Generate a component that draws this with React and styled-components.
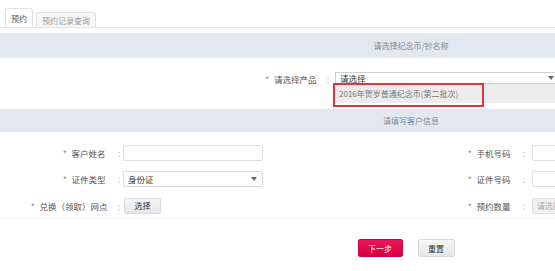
import styled, { createGlobalStyle } from "styled-components";

const GlobalStyle = createGlobalStyle`
  body {
    margin: 0;
    background: #fff;
    overflow: hidden;
    font-family: "Noto Sans CJK SC", "Liberation Sans", sans-serif;
    color: #444;
  }
`;

const Page = styled.div`
  width: 822px;
`;

const TabBar = styled.div`
  height: 28px;
  display: flex;
  align-items: flex-end;
  gap: 3px;
  padding-left: 5px;
  border-bottom: 1px solid #e4e4e4;
  box-sizing: border-box;
`;

const Tab = styled.div`
  height: ${(p) => (p.$active ? "19px" : "15px")};
  padding: 0 5px;
  display: flex;
  align-items: center;
  font-size: 8px;
  color: ${(p) => (p.$active ? "#555" : "#999")};
  background: ${(p) => (p.$active ? "#fff" : "#f7f7f7")};
  border: 1px solid #e2e2e2;
  border-bottom: none;
  border-radius: 3px 3px 0 0;
  box-sizing: border-box;
`;

const Band = styled.div`
  height: ${(p) => p.$height}px;
  margin-top: ${(p) => p.$top || 0}px;
  background: #e2e8ef;
  display: flex;
  align-items: center;
  justify-content: center;
  font-size: 8px;
  color: #7f8b99;
`;

const ProductRow = styled.div`
  height: 51px;
  display: flex;
  align-items: flex-start;
  padding-top: 14px;
  box-sizing: border-box;
`;

const Label = styled.div`
  width: ${(p) => p.$width}px;
  flex-shrink: 0;
  display: flex;
  justify-content: flex-end;
  align-items: center;
  gap: ${(p) => p.$gap || 12}px;
  font-size: 8.5px;
  color: #555;
  white-space: nowrap;
  height: 14px;

  & i {
    font-style: normal;
    color: #888;
    margin-right: 3px;
  }
  & b {
    font-weight: normal;
    color: #aaa;
  }
`;

const SelectWrap = styled.div`
  position: relative;
  margin-left: ${(p) => p.$gap}px;
`;

const Select = styled.div`
  width: ${(p) => p.$width}px;
  height: ${(p) => p.$height}px;
  border: 1px solid ${(p) => p.$border || "#dcdcdc"};
  background: #fff;
  box-sizing: border-box;
  display: flex;
  align-items: center;
  justify-content: space-between;
  padding: 0 5px 0 4px;
  font-size: 8.5px;
  line-height: 1;
  color: #333;

  &::after {
    content: "";
    border-left: 3.5px solid transparent;
    border-right: 3.5px solid transparent;
    border-top: 4px solid #666;
  }
`;

const Menu = styled.div`
  position: absolute;
  top: 12px;
  left: 0;
  width: 225px;
  height: 19px;
  background: #ececec;
  display: flex;
  align-items: center;
  padding-left: 4px;
  box-sizing: border-box;
  font-size: 8px;
  color: #777;
`;

const Highlight = styled.div`
  position: absolute;
  top: 11px;
  left: -2px;
  width: 151px;
  height: 24px;
  border: 2px solid #e0343f;
  box-sizing: border-box;
`;

const Form = styled.div`
  padding-top: 13px;
  display: grid;
  grid-template-columns: 411px 411px;
  row-gap: 6px;
  height: 87px;
  box-sizing: border-box;
  border-bottom: 1px solid #f3f3f3;
`;

const Field = styled.div`
  height: 16px;
  display: flex;
  align-items: center;
`;

const Input = styled.div`
  width: 140px;
  height: 16px;
  margin-left: ${(p) => p.$gap}px;
  border: 1px solid #dedede;
  border-radius: 2px;
  box-sizing: border-box;
  background: ${(p) => (p.$disabled ? "#f0f0f0" : "#fff")};
  font-size: 8px;
  color: #aaa;
  display: flex;
  align-items: center;
  padding-left: 4px;
`;

const FieldSelect = styled(Select)`
  margin-left: ${(p) => p.$gap}px;
  border-radius: 2px;
`;

const Button = styled.button`
  height: ${(p) => p.$height || 18}px;
  width: ${(p) => p.$width}px;
  margin-left: ${(p) => p.$gap || 0}px;
  padding: 0;
  font-family: inherit;
  font-size: 8px;
  border-radius: 2px;
  border: 1px solid ${(p) => (p.$primary ? "#d8003c" : "#dadada")};
  background: ${(p) =>
    p.$primary
      ? "linear-gradient(#e8175a, #d6003e)"
      : "linear-gradient(#f6f6f6, #e6e6e6)"};
  color: ${(p) => (p.$primary ? "#fff" : "#333")};
`;

const Actions = styled.div`
  display: flex;
  justify-content: center;
  gap: 15px;
  padding-top: 20px;
  padding-right: 10px;
`;

export default function App() {
  return (
    <>
      <GlobalStyle />
      <Page>
        <TabBar>
          <Tab $active>预约</Tab>
          <Tab>预约记录查询</Tab>
        </TabBar>

        <Band $top={5} $height={25}>请选择纪念币/钞名称</Band>

        <ProductRow>
          <Label $width={329} $gap={10}>
            <span><i>*</i> 请选择产品</span>
            <b>:</b>
          </Label>
          <SelectWrap $gap={6}>
            <Select $width={225} $height={12} $border="#cfcfcf">请选择</Select>
            <Menu>2016年贺岁普通纪念币(第二批次)</Menu>
            <Highlight />
          </SelectWrap>
        </ProductRow>

        <Band $height={23}>请填写客户信息</Band>

        <Form>
          <Field>
            <Label $width={120}>
              <span><i>*</i> 客户姓名</span>
              <b>:</b>
            </Label>
            <Input $gap={3} />
          </Field>
          <Field>
            <Label $width={114}>
              <span><i>*</i> 手机号码</span>
              <b>:</b>
            </Label>
            <Input $gap={7} />
          </Field>

          <Field>
            <Label $width={120}>
              <span><i>*</i> 证件类型</span>
              <b>:</b>
            </Label>
            <FieldSelect $gap={3} $width={140} $height={16}>身份证</FieldSelect>
          </Field>
          <Field>
            <Label $width={114}>
              <span><i>*</i> 证件号码</span>
              <b>:</b>
            </Label>
            <Input $gap={7} />
          </Field>

          <Field>
            <Label $width={120} $gap={10}>
              <span><i>*</i> 兑换（领取）网点</span>
              <b>:</b>
            </Label>
            <Button $gap={4} $width={37} $height={16}>选择</Button>
          </Field>
          <Field>
            <Label $width={114}>
              <span><i>*</i> 预约数量</span>
              <b>:</b>
            </Label>
            <Input $gap={7} $disabled>请选择</Input>
          </Field>
        </Form>

        <Actions>
          <Button $primary $width={45}>下一步</Button>
          <Button $width={37}>重置</Button>
        </Actions>
      </Page>
    </>
  );
}
